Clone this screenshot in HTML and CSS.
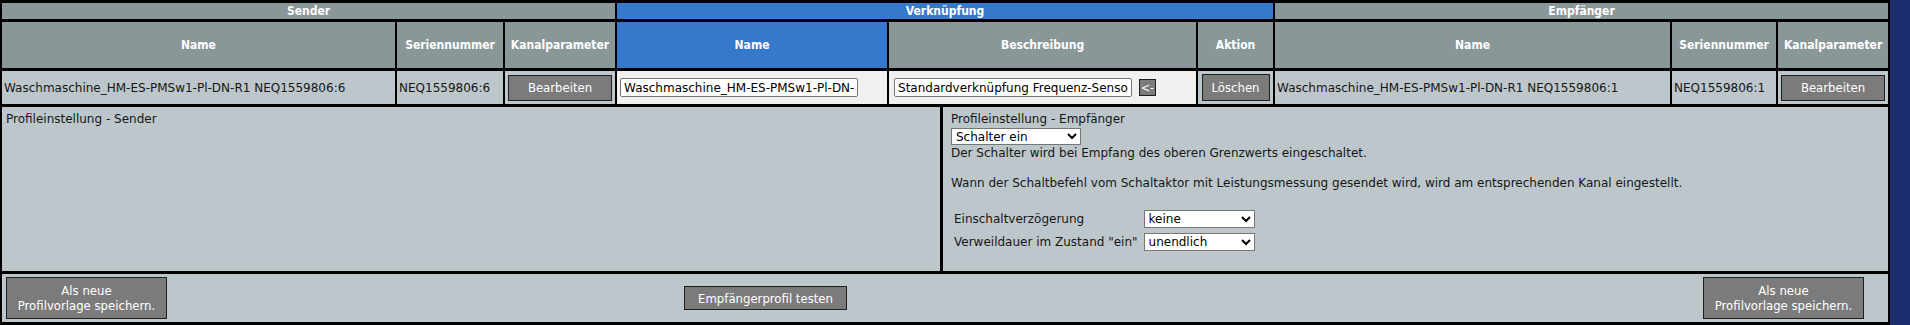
FILE: index.html
```html
<!DOCTYPE html>
<html lang="de">
<head>
    <meta charset="UTF-8">
    <meta name="viewport" content="width=device-width, initial-scale=1.0">
    <title>Direkte Verknüpfung</title>
    <link rel="stylesheet" href="styles.css">
</head>
<body>
    <div class="seite">
        <table class="verkn">
            <colgroup>
                <col style="width: 393px">
                <col style="width: 106px">
                <col style="width: 110px">
                <col style="width: 270px">
                <col style="width: 307px">
                <col style="width: 75px">
                <col style="width: 395px">
                <col style="width: 104px">
                <col style="width: 110px">
            </colgroup>
            <tr class="gruppe">
                <th colspan="3">Sender</th>
                <th colspan="3" class="blau">Verknüpfung</th>
                <th colspan="3">Empfänger</th>
            </tr>
            <tr class="kopf">
                <th>Name</th>
                <th>Seriennummer</th>
                <th>Kanalparameter</th>
                <th class="blau">Name</th>
                <th>Beschreibung</th>
                <th>Aktion</th>
                <th>Name</th>
                <th>Seriennummer</th>
                <th>Kanalparameter</th>
            </tr>
            <tr class="daten">
                <td>Waschmaschine_HM-ES-PMSw1-Pl-DN-R1 NEQ1559806:6</td>
                <td>NEQ1559806:6</td>
                <td class="mitte"><button class="knopf bearbeiten">Bearbeiten</button></td>
                <td class="hell"><input class="feld name" type="text" value="Waschmaschine_HM-ES-PMSw1-Pl-DN-R1"></td>
                <td class="hell beschr"><input class="feld" type="text" value="Standardverknüpfung Frequenz-Sensor - Schaltaktor"><button class="knopf pfeil">&lt;-</button></td>
                <td class="mitte"><button class="knopf loeschen">Löschen</button></td>
                <td>Waschmaschine_HM-ES-PMSw1-Pl-DN-R1 NEQ1559806:1</td>
                <td>NEQ1559806:1</td>
                <td class="mitte"><button class="knopf bearbeiten">Bearbeiten</button></td>
            </tr>
        </table>

        <div class="profile">
            <div class="profil">Profileinstellung - Sender</div>
            <div class="profil empf">
                <div>Profileinstellung - Empfänger</div>
                <select class="auswahl profilwahl">
                    <option>Schalter ein</option>
                    <option>Schalter aus</option>
                </select>
                <p class="text">Der Schalter wird bei Empfang des oberen Grenzwerts eingeschaltet.</p>
                <p class="text abstand">Wann der Schaltbefehl vom Schaltaktor mit Leistungsmessung gesendet wird, wird am entsprechenden Kanal eingestellt.</p>
                <table class="param">
                    <tr>
                        <td>Einschaltverzögerung</td>
                        <td><select class="auswahl"><option>keine</option></select></td>
                    </tr>
                    <tr>
                        <td>Verweildauer im Zustand "ein"</td>
                        <td><select class="auswahl"><option>unendlich</option></select></td>
                    </tr>
                </table>
            </div>
        </div>

        <div class="aktionen">
            <button class="knopf gross">Als neue<br>Profilvorlage speichern.</button>
            <button class="knopf testen">Empfängerprofil testen</button>
            <button class="knopf gross rechts">Als neue<br>Profilvorlage speichern.</button>
        </div>
    </div>
</body>
</html>
```

FILE: styles.css
```css
/* grundlage */
*{
    margin: 0;
    padding: 0;
    box-sizing: border-box;
}
body{
    background-color: #1c2d6e;
    font-family: "DejaVu Sans", sans-serif;
    font-size: 12px;
    color: #161616;
}
.seite{
    width: 1890px;
    background-color: #000;
}

/* verknuepfungstabelle */
.verkn{
    width: 1890px;
    table-layout: fixed;
    border-collapse: separate;
    border-spacing: 2px 3px;
    background-color: #000;
}
.verkn th{
    background-color: #8a9799;
    color: #fff;
    font-family: "DejaVu Sans Condensed", "DejaVu Sans", sans-serif;
    font-stretch: condensed;
    font-weight: bold;
    text-align: center;
}
.verkn .blau{
    background-color: #3579cc;
}
.gruppe th{
    height: 16px;
    line-height: 14px;
}
.kopf th{
    height: 46px;
}
.daten td{
    height: 33px;
    background-color: #bdc7cb;
    padding: 0 2px;
    white-space: nowrap;
    overflow: hidden;
}
.daten .hell{
    background-color: #f0f0f0;
}
.daten .mitte{
    text-align: center;
    padding: 0;
}
.daten .beschr{
    padding-left: 5px;
}

/* knoepfe */
.knopf{
    font-family: "DejaVu Sans Condensed", "DejaVu Sans", sans-serif;
    font-stretch: condensed;
    font-size: 13px;
    color: #fff;
    background-color: #7b7b7b;
    border: 1px solid #1e1e1e;
    cursor: pointer;
}
.bearbeiten{
    width: 104px;
    height: 26px;
}
.loeschen{
    width: 68px;
    height: 27px;
}
.pfeil{
    width: 17px;
    height: 17px;
    margin-left: 7px;
    font-size: 12px;
    line-height: 14px;
    vertical-align: middle;
}

/* eingabefelder */
.feld{
    width: 238px;
    height: 19px;
    padding: 0 3px;
    font-family: inherit;
    font-size: 12px;
    color: #000;
    background-color: #fff;
    border: 1px solid #767676;
    border-radius: 2px;
    vertical-align: middle;
}
.feld.name{
    margin-left: 1px;
}

/* profile */
.profile{
    display: grid;
    grid-template-columns: 938px 945px;
    column-gap: 3px;
    padding: 0 2px 3px;
}
.profil{
    height: 164px;
    background-color: #bdc7cb;
    padding: 5px 4px;
    line-height: 15px;
}
.profil.empf{
    padding-left: 8px;
}
.auswahl{
    height: 17px;
    font-family: inherit;
    font-size: 12px;
    color: #000;
    background-color: #fff;
    border: 1px solid #767676;
    border-radius: 0;
}
.profilwahl{
    display: block;
    width: 130px;
    margin-top: 1px;
}
.text{
    margin-top: 1px;
}
.abstand{
    margin-top: 15px;
}
.param{
    margin-top: 17px;
    border-spacing: 0;
}
.param td{
    padding: 2px 3px 3px;
    white-space: nowrap;
}
.param .auswahl{
    width: 111px;
    height: 18px;
}

/* untere knoepfe */
.aktionen{
    display: flex;
    align-items: center;
    margin: 0 2px;
    padding: 0 24px 0 4px;
    background-color: #bdc7cb;
    border-bottom: 3px solid #000;
    height: 51px;
}
.gross{
    width: 161px;
    height: 42px;
    line-height: 15px;
}
.testen{
    width: 163px;
    height: 24px;
    margin-left: 517px;
}
.rechts{
    margin-left: auto;
}
```
